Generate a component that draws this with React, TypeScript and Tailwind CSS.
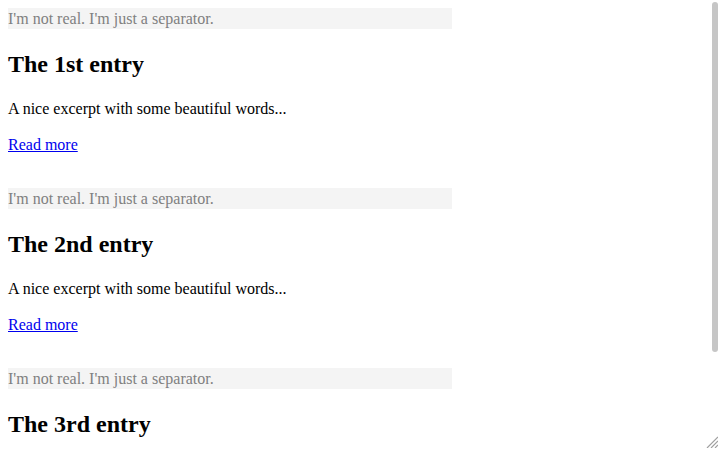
import React from 'react';

const entries = ['The 1st entry', 'The 2nd entry', 'The 3rd entry'];

const Separator: React.FC = () => (
  <div className="h-[21px] w-[444px] bg-[#f4f4f4] text-base leading-[21px] text-[#808080]">
    I'm not real. I'm just a separator.
  </div>
);

// last entry is cut by the window, only its title shows
const Entry: React.FC<{ title: string; full: boolean }> = ({ title, full }) => (
  <article className="mb-[33px]">
    <Separator />
    <h2 className="mt-[21px] text-2xl font-bold leading-[28px] text-black">{title}</h2>
    {full && (
      <>
        <p className="mt-[21px] text-base leading-5 text-black">A nice excerpt with some beautiful words...</p>
        <p className="mt-4 text-base leading-5">
          <a href="#" className="text-[#0000ee] underline">Read more</a>
        </p>
      </>
    )}
  </article>
);

const App: React.FC = () => {
  return (
    <div className="relative h-[450px] w-[720px] overflow-hidden bg-white font-['Liberation_Serif','Times_New_Roman',serif]">
      <div className="h-full overflow-hidden p-2">
        {entries.map((t, i) => (
          <Entry key={t} title={t} full={i < entries.length - 1} />
        ))}
      </div>

      {/* fake scrollbar thumb + resize grip */}
      <div className="absolute right-[2px] top-[2px] h-[350px] w-[6px] rounded-[3px] bg-[#c6c6c6]" />
      <svg className="absolute bottom-[2px] right-[2px] h-[12px] w-[12px]" viewBox="0 0 12 12">
        <path d="M12 1 L1 12 M12 5 L5 12 M12 9 L9 12" stroke="#a0a0a0" strokeWidth="1.2" fill="none" />
      </svg>
    </div>
  );
};

export default App;
